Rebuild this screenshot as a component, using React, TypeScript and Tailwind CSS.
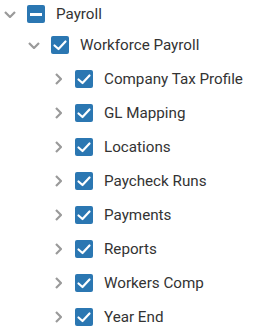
type Node = {
  label: string;
  state: "checked" | "partial";
  open?: boolean;
  children?: Node[];
};

const tree: Node = {
  label: "Payroll",
  state: "partial",
  open: true,
  children: [
    {
      label: "Workforce Payroll",
      state: "checked",
      open: true,
      children: [
        "Company Tax Profile",
        "GL Mapping",
        "Locations",
        "Paycheck Runs",
        "Payments",
        "Reports",
        "Workers Comp",
        "Year End",
      ].map((label) => ({ label, state: "checked" as const, open: false })),
    },
  ],
};

const Chevron = ({ open }: { open?: boolean }) => (
  <span className="flex w-3 h-3 items-center justify-center">
    {open ? (
      <svg width="12" height="7" viewBox="0 0 12 7" fill="none">
        <polyline points="1,1 6,6 11,1" stroke="#9a9a9a" strokeWidth="2.2" />
      </svg>
    ) : (
      <svg width="7" height="12" viewBox="0 0 7 12" fill="none">
        <polyline points="1,1 6,6 1,11" stroke="#9a9a9a" strokeWidth="2.2" />
      </svg>
    )}
  </span>
);

const Checkbox = ({ state }: { state: Node["state"] }) => (
  <span className="flex w-[18px] h-[18px] items-center justify-center rounded-[2px] bg-[#2b77b2]">
    {state === "checked" ? (
      <svg width="18" height="18" viewBox="0 0 18 18" fill="none">
        <polyline
          points="3.5,9.5 7.5,13 14.5,5.5"
          stroke="#fff"
          strokeWidth="2.2"
          strokeLinecap="round"
          strokeLinejoin="round"
        />
      </svg>
    ) : (
      <span className="block w-3 h-[3px] bg-white" />
    )}
  </span>
);

const TreeRow = ({ node, level }: { node: Node; level: number }) => (
  <div>
    <div
      className={`flex items-center ${level === 0 ? "h-7" : "h-[34px]"}`}
      style={{ paddingLeft: 4 + level * 24 }}
    >
      <Chevron open={node.open} />
      <span className="ml-[11px]">
        <Checkbox state={node.state} />
      </span>
      <span className="ml-[11px] text-[15.2px] text-[#333]">{node.label}</span>
    </div>
    {node.open &&
      node.children?.map((c) => (
        <TreeRow key={c.label} node={c} level={level + 1} />
      ))}
  </div>
);

export default function App() {
  return (
    <div className="w-[278px] h-[333px] bg-white overflow-hidden font-['Roboto',sans-serif]">
      <TreeRow node={tree} level={0} />
    </div>
  );
}
